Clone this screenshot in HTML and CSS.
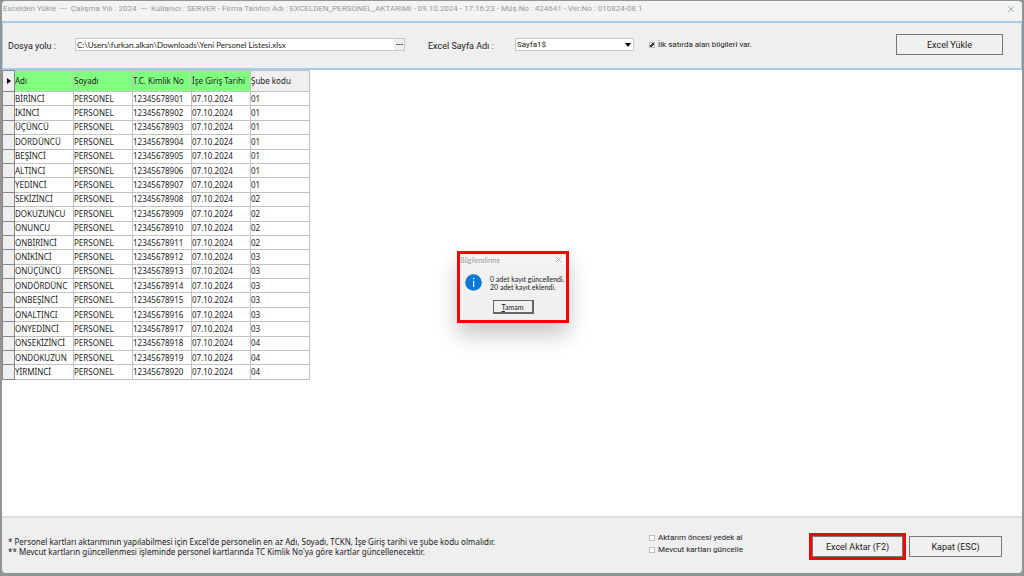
FILE: index.html
```html
<!DOCTYPE html>
<html lang="tr">
<head>
<meta charset="utf-8">
<title>Excelden Yükle</title>
<link rel="stylesheet" href="styles.css">
</head>
<body>
<div class="window">
  <header class="titlebar">
    <h1 class="title">Excelden Yükle&nbsp; ---&nbsp; Çalışma Yılı : 2024&nbsp; ---&nbsp; Kullanıcı : SERVER - Firma Tanıtıcı Adı : EXCELDEN_PERSONEL_AKTARIMI - 09.10.2024 - 17:16:23 - Müş.No : 424641 - Ver.No : 010824-08.1</h1>
    <button class="close" type="button" aria-label="Kapat"><svg width="8" height="8" viewBox="0 0 8 8"><path d="M1 1l6 6M7 1L1 7"/></svg></button>
  </header>

  <form class="toolbar">
    <label class="label path-label" for="path">Dosya yolu :</label>
    <div class="path-box">
      <input class="path" id="path" type="text" value="C:\Users\furkan.alkan\Downloads\Yeni Personel Listesi.xlsx">
      <button class="browse" type="button" aria-label="Gözat"><svg width="7" height="2" viewBox="0 0 7 2"><path d="M0 0h2v1H0zM2.500 0h2v1h-2zM5 0h2v1H5z" fill="#555"/></svg></button>
    </div>
    <label class="label sheet-label" for="sheet">Excel Sayfa Adı :</label>
    <div class="sheet-box">
      <select class="sheet" id="sheet"><option>Sayfa1$</option></select>
      <svg class="arrow" width="6" height="4" viewBox="0 0 6 4"><path d="M0 0h6L3 4z"/></svg>
    </div>
    <label class="check header-check"><input type="checkbox" checked>İlk satırda alan bilgileri var.</label>
    <button class="button load" type="button">Excel Yükle</button>
  </form>

  <main class="content">
    <table class="grid">
      <colgroup><col class="col-mark"><col><col><col><col><col></colgroup>
      <thead>
        <tr><th class="mark"><svg width="4" height="6" viewBox="0 0 4 6"><path d="M0 0l4 3-4 3z"/></svg></th><th class="mapped">Adı</th><th class="mapped">Soyadı</th><th class="mapped">T.C. Kimlik No</th><th class="mapped">İşe Giriş Tarihi</th><th>Şube kodu</th></tr>
      </thead>
      <tbody>
        <tr><td class="mark"></td><td>BİRİNCİ</td><td>PERSONEL</td><td>12345678901</td><td>07.10.2024</td><td>01</td></tr>
        <tr><td class="mark"></td><td>İKİNCİ</td><td>PERSONEL</td><td>12345678902</td><td>07.10.2024</td><td>01</td></tr>
        <tr><td class="mark"></td><td>ÜÇÜNCÜ</td><td>PERSONEL</td><td>12345678903</td><td>07.10.2024</td><td>01</td></tr>
        <tr><td class="mark"></td><td>DÖRDÜNCÜ</td><td>PERSONEL</td><td>12345678904</td><td>07.10.2024</td><td>01</td></tr>
        <tr><td class="mark"></td><td>BEŞİNCİ</td><td>PERSONEL</td><td>12345678905</td><td>07.10.2024</td><td>01</td></tr>
        <tr><td class="mark"></td><td>ALTINCI</td><td>PERSONEL</td><td>12345678906</td><td>07.10.2024</td><td>01</td></tr>
        <tr><td class="mark"></td><td>YEDİNCİ</td><td>PERSONEL</td><td>12345678907</td><td>07.10.2024</td><td>01</td></tr>
        <tr><td class="mark"></td><td>SEKİZİNCİ</td><td>PERSONEL</td><td>12345678908</td><td>07.10.2024</td><td>02</td></tr>
        <tr><td class="mark"></td><td>DOKUZUNCU</td><td>PERSONEL</td><td>12345678909</td><td>07.10.2024</td><td>02</td></tr>
        <tr><td class="mark"></td><td>ONUNCU</td><td>PERSONEL</td><td>12345678910</td><td>07.10.2024</td><td>02</td></tr>
        <tr><td class="mark"></td><td>ONBİRİNCİ</td><td>PERSONEL</td><td>12345678911</td><td>07.10.2024</td><td>02</td></tr>
        <tr><td class="mark"></td><td>ONİKİNCİ</td><td>PERSONEL</td><td>12345678912</td><td>07.10.2024</td><td>03</td></tr>
        <tr><td class="mark"></td><td>ONÜÇÜNCÜ</td><td>PERSONEL</td><td>12345678913</td><td>07.10.2024</td><td>03</td></tr>
        <tr><td class="mark"></td><td>ONDÖRDÜNC</td><td>PERSONEL</td><td>12345678914</td><td>07.10.2024</td><td>03</td></tr>
        <tr><td class="mark"></td><td>ONBEŞİNCİ</td><td>PERSONEL</td><td>12345678915</td><td>07.10.2024</td><td>03</td></tr>
        <tr><td class="mark"></td><td>ONALTINCI</td><td>PERSONEL</td><td>12345678916</td><td>07.10.2024</td><td>03</td></tr>
        <tr><td class="mark"></td><td>ONYEDİNCİ</td><td>PERSONEL</td><td>12345678917</td><td>07.10.2024</td><td>03</td></tr>
        <tr><td class="mark"></td><td>ONSEKİZİNCİ</td><td>PERSONEL</td><td>12345678918</td><td>07.10.2024</td><td>04</td></tr>
        <tr><td class="mark"></td><td>ONDOKUZUN</td><td>PERSONEL</td><td>12345678919</td><td>07.10.2024</td><td>04</td></tr>
        <tr><td class="mark"></td><td>YİRMİNCİ</td><td>PERSONEL</td><td>12345678920</td><td>07.10.2024</td><td>04</td></tr>
      </tbody>
    </table>
  </main>

  <footer class="footer">
    <div class="notes">
      <p>* Personel kartları aktarımının yapılabilmesi için Excel'de personelin en az Adı, Soyadı, TCKN, İşe Giriş tarihi ve şube kodu olmalıdır.</p>
      <p>** Mevcut kartların güncellenmesi işleminde personel kartlarında TC Kimlik No'ya göre kartlar güncellenecektir.</p>
    </div>
    <div class="options">
      <label class="check"><input type="checkbox">Aktarım öncesi yedek al</label>
      <label class="check"><input type="checkbox">Mevcut kartları güncelle</label>
    </div>
    <div class="highlight"><button class="button" type="button">Excel Aktar (F2)</button></div>
    <button class="button cancel" type="button">Kapat (ESC)</button>
  </footer>
</div>

<div class="overlay">
  <section class="dialog" role="dialog" aria-labelledby="dialog-title">
    <div class="dialog-head">
      <h2 class="dialog-title" id="dialog-title">Bilgilendirme</h2>
      <button class="close" type="button" aria-label="Kapat"><svg width="7" height="7" viewBox="0 0 8 8"><path d="M1 1l6 6M7 1L1 7"/></svg></button>
    </div>
    <div class="dialog-body">
      <svg class="info" width="17" height="17" viewBox="0 0 17 17"><circle cx="8.500" cy="8.500" r="8.300" fill="#0a78d4"/><path d="M8 4h1.200v1.300H8zM8 6.700h1.200V13H8z" fill="#fff"/></svg>
      <p>0 adet kayıt güncellendi.<br>20 adet kayıt eklendi.</p>
    </div>
    <button class="ok" type="button"><u>T</u>amam</button>
  </section>
</div>
</body>
</html>
```

FILE: styles.css
```css
* { box-sizing: border-box; }
body {
  margin: 0;
  height: 100vh;
  padding: 1px 2px 3px;
  background: #8f9796;
  color: #222;
  font: 8px/10px Roboto, "Noto Sans", sans-serif;
}
h1, h2, p { margin: 0; font: inherit; }
button, input, select { margin: 0; font: inherit; color: inherit; }
.window {
  display: flex;
  flex-direction: column;
  height: 100%;
  background: #efefef;
  border-radius: 4px;
  overflow: hidden;
}
.titlebar {
  display: flex;
  align-items: center;
  justify-content: space-between;
  height: 20px;
  padding: 0 7px 4px 1px;
  background: #f3f3f3;
  color: #999;
}
.title { font-size: 8px; white-space: nowrap; }
.close { display: flex; padding: 0; border: 0; background: none; }
.close path { fill: none; stroke: #aaa; stroke-width: 1; }
.toolbar {
  display: flex;
  align-items: center;
  height: 49px;
  padding: 0 18px 2px 5px;
  border: 1px solid #8fbbe0;
  border-width: 2px 1px;
  border-color: #a6cae8;
  background: #efefef;
}
.label { padding-top: 2px; font-size: 9px; white-space: nowrap; }
.path-label { width: 67px; }
.path-box, .sheet-box {
  display: flex;
  align-items: center;
  height: 13px;
  border: 1px solid #c8c8c8;
  background: #fff;
}
.path-box { width: 330px; }
.path { flex: 1; min-width: 0; height: 11px; padding: 0 1px; border: 0; background: none; font-family: Lato, Roboto, sans-serif; }
.browse {
  display: flex;
  align-items: center;
  justify-content: center;
  width: 10px;
  height: 11px;
  padding: 0;
  border: 0;
  background: #efefef;
}
.sheet-label { width: 87px; margin-left: 23px; }
.sheet-box { position: relative; width: 119px; }
.sheet { width: 100%; height: 11px; padding: 0 1px; border: 0; background: none; appearance: none; }
.arrow { position: absolute; right: 2px; pointer-events: none; }
.check { display: flex; align-items: center; gap: 3px; white-space: nowrap; }
.check input {
  appearance: none;
  width: 6px;
  height: 6px;
  border: 1px solid #bbb;
  background: #fff;
}
.check input:checked {
  background: linear-gradient(135deg, transparent 35%, #333 35% 65%, transparent 65%), #fff;
}
.header-check { margin-left: 15px; }
.button {
  width: 93px;
  height: 21px;
  padding: 0;
  border: 1px solid #777;
  background: #f0f0f0;
  font-size: 9px;
}
.load { width: 107px; margin-left: auto; }
.content { flex: 1; min-height: 0; background: #fff; border-bottom: 2px solid #dedede; }
.grid {
  width: 308px;
  height: 310px;
  table-layout: fixed;
  border-collapse: collapse;
  font-family: "Noto Sans", "Open Sans", sans-serif;
}
.col-mark { width: 12px; }
.grid th, .grid td {
  padding: 0;
  border: 1px solid #c2c2c2;
  font-weight: 400;
  text-align: left;
  white-space: nowrap;
  overflow: hidden;
}
.grid th { height: 21px; background: #efefef; }
.grid .mapped { background: #80ff80; }
.grid .mark { background: #efefef; border-color: #888; text-align: center; }
.footer {
  display: flex;
  align-items: flex-start;
  height: 55px;
  padding: 0 20px 0 6px;
}
.notes { width: 641px; padding-top: 19px; font-family: "Noto Sans", sans-serif; white-space: nowrap; }
.options { display: grid; gap: 2px; padding-top: 15px; }
.highlight { margin: 15px 0 0 auto; border: 3px solid #f00; }
.highlight .button { display: block; width: 91px; }
.cancel { margin: 18px 0 0 3px; }
.overlay {
  position: absolute;
  inset: 0;
  display: flex;
  align-items: center;
  justify-content: center;
  padding: 0 0 2px 2px;
  pointer-events: none;
}
.dialog {
  display: flex;
  flex-direction: column;
  align-items: center;
  width: 112px;
  height: 72px;
  border: 3px solid #f00;
  background: #f0f0f0;
  box-shadow: 0 12px 20px rgba(0, 0, 0, .22);
  font-family: Lato, Roboto, sans-serif;
  font-size: 7px;
  line-height: 8px;
  pointer-events: auto;
}
.dialog-head {
  display: flex;
  align-items: center;
  justify-content: space-between;
  width: 100%;
  height: 11px;
  padding-right: 4px;
  background: #f5f5f5;
  color: #999;
}
.dialog-body { display: flex; align-items: center; gap: 8px; width: 100%; height: 35px; padding-left: 5px; white-space: nowrap; }
.ok {
  width: 41px;
  height: 14px;
  padding: 0;
  border: 1px solid #666;
  border-right-width: 2px;
  border-bottom-width: 2px;
  background: #f0f0f0;
}
```
